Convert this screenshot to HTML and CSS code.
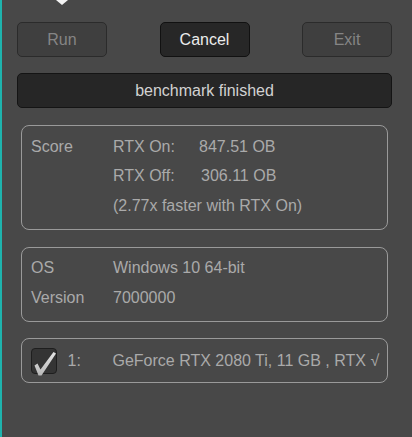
FILE: index.html
```html
<!DOCTYPE html>
<html>
<head>
<meta charset="utf-8">
<link rel="stylesheet" href="styles.css">
</head>
<body>
<div class="page">
  <div class="handle-row"><div class="handle"></div></div>
  <div class="buttons">
    <div class="btn disabled">Run</div>
    <div class="btn active">Cancel</div>
    <div class="btn disabled">Exit</div>
  </div>
  <div class="status">benchmark finished</div>
  <div class="box score">
    <div class="label">Score</div>
    <div class="key">RTX On:</div>
    <div class="val">847.51 OB</div>
    <div class="key">RTX Off:</div>
    <div class="val off">306.11 OB</div>
    <div class="note">(2.77x faster with RTX On)</div>
  </div>
  <div class="box sys">
    <div class="label">OS</div>
    <div class="key">Windows 10 64-bit</div>
    <div class="label">Version</div>
    <div class="key">7000000</div>
  </div>
  <div class="box gpu">
    <div class="check">
      <svg width="26" height="26" viewBox="0 0 26 26"><defs><linearGradient id="g" x1="0" y1="0" x2="0" y2="1"><stop offset="0" stop-color="#e4e4e4"/><stop offset="1" stop-color="#b8b8b8"/></linearGradient></defs><path d="M2.5 15.5 L5.5 13.5 L8.5 19.5 L21.5 2 L24 3.5 L9.5 25.5 L6.5 25.5 Z" fill="url(#g)"/></svg>
    </div>
    <div class="idx">1:</div>
    <div class="gpu-name">GeForce RTX 2080 Ti, 11 GB , RTX √</div>
  </div>
</div>
</body>
</html>
```
FILE: styles.css
```css
html, body {
  margin: 0;
  padding: 0;
}
body {
  background: #484848;
  border-left: 2px solid #1eb3ad;
  height: 437px;
  box-sizing: border-box;
  font-family: "Liberation Sans", Arial, sans-serif;
  font-size: 16px;
  color: #aaaaaa;
  overflow: hidden;
}
.page {
  padding: 0 20px 0 15px;
}
.handle-row {
  height: 22px;
}
.handle {
  margin-left: 39px;
  width: 12px;
  height: 5px;
  background: #f4f4f4;
  clip-path: polygon(0 0, 100% 0, 50% 100%);
  filter: blur(0.6px);
}
.buttons {
  display: flex;
  justify-content: space-between;
}
.btn {
  width: 90px;
  height: 35px;
  box-sizing: border-box;
  border-radius: 5px;
  display: flex;
  align-items: center;
  justify-content: center;
  font-size: 16px;
}
.btn.disabled {
  background: #3f3f3f;
  border: 1px solid #2b2b2b;
  color: #858585;
}
.btn.active {
  background: #272727;
  border: 1.5px solid #111;
  color: #ececec;
}
.status {
  margin-top: 16px;
  height: 35px;
  box-sizing: border-box;
  background: #262626;
  border: 1.5px solid #141414;
  border-radius: 5px;
  display: flex;
  align-items: center;
  justify-content: center;
  color: #d2d2d2;
}
.box {
  margin: 17px 4px 0 4px;
  border: 1.5px solid #9a9a9a;
  border-radius: 8px;
  box-sizing: border-box;
  padding-left: 9px;
}
.score {
  height: 105px;
  padding-top: 6px;
  display: grid;
  grid-template-columns: 82px 86px auto;
  grid-auto-rows: 29.5px;
  align-items: center;
}
.score .label {
  grid-row: 1;
}
.score .key:nth-of-type(2) { grid-column: 2; grid-row: 1; }
.score .val:nth-of-type(3) { grid-column: 3; grid-row: 1; }
.score .key:nth-of-type(4) { grid-column: 2; grid-row: 2; }
.score .val.off { grid-column: 3; grid-row: 2; padding-left: 2px; }
.score .note { grid-column: 2 / 4; grid-row: 3; }
.sys {
  height: 75px;
  padding-top: 5.5px;
  display: grid;
  grid-template-columns: 82px auto;
  grid-auto-rows: 29.4px;
  align-items: center;
}
.gpu {
  height: 45px;
  margin-top: 16px;
  display: flex;
  align-items: center;
}
.check {
  width: 26px;
  height: 26px;
  box-sizing: border-box;
  background: #343434;
  border: 1.5px solid #1e1e1e;
  border-radius: 4px;
  position: relative;
}
.check svg {
  position: absolute;
  left: 0;
  top: 1px;
}
.idx {
  margin-left: 10.5px;
  width: 45px;
}
```
